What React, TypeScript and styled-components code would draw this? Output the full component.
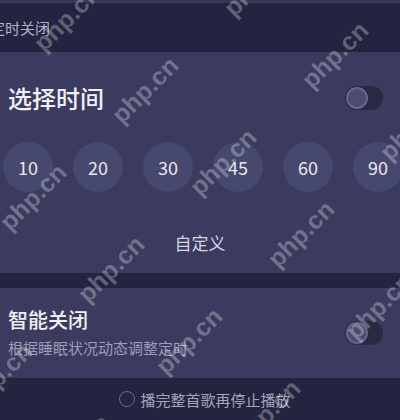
import React from 'react';
import styled, { createGlobalStyle } from 'styled-components';

const GlobalStyle = createGlobalStyle`
  html, body {
    margin: 0;
    padding: 0;
    background: #23243f;
  }
  body {
    font-family: "Noto Sans CJK SC", "Noto Sans", sans-serif;
  }
`;

const Screen = styled.div`
  position: relative;
  width: 400px;
  height: 420px;
  overflow: hidden;
  background: #23243f;
  display: flex;
  flex-direction: column;
`;

const TopBar = styled.div`
  height: 49px;
  flex: 0 0 auto;
  border-top: 3px solid #34365a;
  display: flex;
  align-items: center;
  font-size: 15px;
  color: #aeb0c4;
  text-indent: -10px;
  white-space: nowrap;
`;

const Card = styled.section<{ $pad: string }>`
  background: #3a3b5e;
  padding: ${p => p.$pad};
  display: flex;
  flex-direction: column;
  flex: 0 0 auto;
`;

const HeaderRow = styled.div`
  display: flex;
  align-items: center;
  justify-content: space-between;
  padding: 0 17px 0 8px;
`;

const Title = styled.h2<{ $size: number; $lh: number }>`
  margin: 0;
  font-size: ${p => p.$size}px;
  line-height: ${p => p.$lh}px;
  font-weight: 500;
  color: #f0f0f6;
`;

const Sub = styled.p`
  margin: 5px 0 0;
  font-size: 15px;
  line-height: 20px;
  color: #9c9db6;
`;

const Toggle = styled.div`
  width: 38px;
  height: 24px;
  border-radius: 12px;
  background: #282943;
  display: flex;
  align-items: center;
  padding: 0 1px;
  box-sizing: border-box;
`;

const Knob = styled.div`
  width: 22px;
  height: 22px;
  border-radius: 50%;
  box-sizing: border-box;
  border: 2px solid #66688b;
  background: #4a4c70;
`;

const Chips = styled.div`
  display: flex;
  gap: 20px;
  padding-left: 3px;
  margin-top: 28px;
  overflow: hidden;
`;

const Chip = styled.div`
  flex: 0 0 50px;
  height: 50px;
  border-radius: 50%;
  background: #46486d;
  display: flex;
  align-items: center;
  justify-content: center;
  font-size: 18px;
  color: #e8e8f0;
`;

const Custom = styled.div`
  margin-top: 39px;
  text-align: center;
  font-size: 17px;
  line-height: 24px;
  color: #d4d5e0;
`;

const Band = styled.div`
  height: 15px;
  flex: 0 0 auto;
  background: #23243f;
`;

const SmartRow = styled.div`
  display: flex;
  align-items: center;
  justify-content: space-between;
  padding: 0 17px 0 8px;
`;

const Footer = styled.div`
  flex: 1;
  display: flex;
  align-items: center;
  justify-content: center;
  gap: 5px;
  padding-left: 10px;
  font-size: 15px;
  color: #a6a7ba;
`;

const Radio = styled.span`
  width: 16px;
  height: 16px;
  border-radius: 50%;
  box-sizing: border-box;
  border: 1.5px solid #6d6f8a;
`;

const Watermarks = styled.div`
  position: absolute;
  inset: 0;
  pointer-events: none;
`;

const Mark = styled.span`
  position: absolute;
  font-family: "Liberation Sans", Arial, sans-serif;
  font-weight: 700;
  font-size: 25px;
  color: rgba(255, 255, 255, 0.28);
  white-space: nowrap;
  transform: translate(-50%, -50%) rotate(-45deg);
`;

const times = [10, 20, 30, 45, 60, 90];

const marks: { x: number; y: number }[] = [];
for (let n = -3; n <= 5; n++) {
  for (let m = -2; m <= 3; m++) {
    const x = 145 + n * 78 - m * 190;
    const y = 90 + n * 72 + m * 35;
    if (x > -50 && x < 450 && y > -40 && y < 460) marks.push({ x, y });
  }
}

export default function App() {
  return (
    <Screen>
      <GlobalStyle />
      <TopBar>定时关闭</TopBar>
      <Card $pad="30px 0 18px">
        <HeaderRow>
          <Title $size={24} $lh={32}>选择时间</Title>
          <Toggle><Knob /></Toggle>
        </HeaderRow>
        <Chips>
          {times.map(t => (
            <Chip key={t}>{t}</Chip>
          ))}
        </Chips>
        <Custom>自定义</Custom>
      </Card>
      <Band />
      <Card $pad="19px 0 20px">
        <SmartRow>
          <div>
            <Title $size={20} $lh={26}>智能关闭</Title>
            <Sub>根据睡眠状况动态调整定时</Sub>
          </div>
          <Toggle><Knob /></Toggle>
        </SmartRow>
      </Card>
      <Footer>
        <Radio />
        <span>播完整首歌再停止播放</span>
      </Footer>
      <Watermarks>
        {marks.map((p, i) => (
          <Mark key={i} style={{ left: p.x, top: p.y }}>php.cn</Mark>
        ))}
      </Watermarks>
    </Screen>
  );
}
